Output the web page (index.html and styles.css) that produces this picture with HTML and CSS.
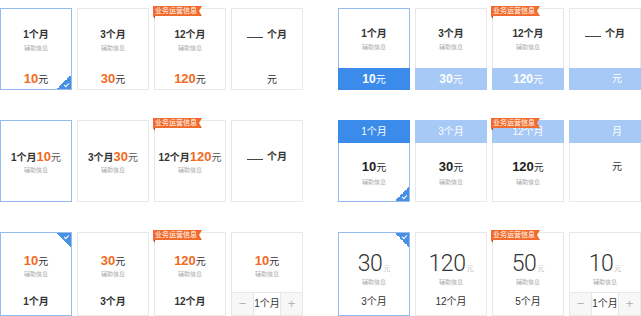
FILE: index.html
```html
<!DOCTYPE html>
<html lang="zh">
<head>
<meta charset="utf-8">
<title>套餐选择</title>
<link rel="stylesheet" href="styles.css">
</head>
<body>
<div class="board">
  <div class="group">
    <!-- row 1 left -->
    <div class="card a sel"><div class="ttl">1个月</div><div class="sub">辅助信息</div><div class="price"><b>10</b>元</div><i class="tick br"></i></div>
    <div class="card a"><div class="ttl">3个月</div><div class="sub">辅助信息</div><div class="price"><b>30</b>元</div></div>
    <div class="card a"><span class="badge"><span class="bdg">业务运营信息</span></span><div class="ttl">12个月</div><div class="sub">辅助信息</div><div class="price"><b>120</b>元</div></div>
    <div class="card a"><div class="ttl"><span class="line"></span> 个月</div><div class="price"><span class="gap s"></span>元</div></div>
    <!-- row 2 left -->
    <div class="card c sel"><div class="ttl">1个月<b class="o">10</b><span class="yuan">元</span></div><div class="sub">辅助信息</div></div>
    <div class="card c"><div class="ttl">3个月<b class="o">30</b><span class="yuan">元</span></div><div class="sub">辅助信息</div></div>
    <div class="card c"><span class="badge"><span class="bdg">业务运营信息</span></span><div class="ttl">12个月<b class="o">120</b><span class="yuan">元</span></div><div class="sub">辅助信息</div></div>
    <div class="card c"><div class="ttl"><span class="line"></span> 个月</div></div>
    <!-- row 3 left -->
    <div class="card e sel"><div class="price"><b>10</b>元</div><div class="sub">辅助信息</div><div class="foot">1个月</div><i class="tick tr"></i></div>
    <div class="card e"><div class="price"><b>30</b>元</div><div class="sub">辅助信息</div><div class="foot">3个月</div></div>
    <div class="card e"><span class="badge"><span class="bdg">业务运营信息</span></span><div class="price"><b>120</b>元</div><div class="sub">辅助信息</div><div class="foot">12个月</div></div>
    <div class="card e"><div class="price"><b>10</b>元</div><div class="sub">辅助信息</div>
      <div class="stepper"><span class="btn">−</span><span class="val">1个月</span><span class="btn">+</span></div></div>
  </div>

  <div class="group">
    <!-- row 1 right -->
    <div class="card b sel"><div class="ttl">1个月</div><div class="sub">辅助信息</div><div class="bar"><b>10</b>元</div></div>
    <div class="card b"><div class="ttl">3个月</div><div class="sub">辅助信息</div><div class="bar"><b>30</b>元</div></div>
    <div class="card b"><span class="badge"><span class="bdg">业务运营信息</span></span><div class="ttl">12个月</div><div class="sub">辅助信息</div><div class="bar"><b>120</b>元</div></div>
    <div class="card b"><div class="ttl"><span class="line"></span> 个月</div><div class="bar"><span class="gap"></span>元</div></div>
    <!-- row 2 right -->
    <div class="card d sel"><div class="head">1个月</div><div class="price"><b>10</b>元</div><div class="sub">辅助信息</div><i class="tick br"></i></div>
    <div class="card d"><div class="head">3个月</div><div class="price"><b>30</b>元</div><div class="sub">辅助信息</div></div>
    <div class="card d"><span class="badge"><span class="bdg">业务运营信息</span></span><div class="head">12个月</div><div class="price"><b>120</b>元</div><div class="sub">辅助信息</div></div>
    <div class="card d"><div class="head"><span class="gap"></span>月</div><div class="price"><span class="gap"></span>元</div></div>
    <!-- row 3 right -->
    <div class="card f sel"><div class="big">30<span class="u">元</span></div><div class="sub">辅助信息</div><div class="foot">3个月</div><i class="tick tr"></i></div>
    <div class="card f"><div class="big">120<span class="u">元</span></div><div class="sub">辅助信息</div><div class="foot">12个月</div></div>
    <div class="card f"><span class="badge"><span class="bdg">业务运营信息</span></span><div class="big">50<span class="u">元</span></div><div class="sub">辅助信息</div><div class="foot">5个月</div></div>
    <div class="card f"><div class="big">10<span class="u">元</span></div><div class="sub">辅助信息</div>
      <div class="stepper"><span class="btn">−</span><span class="val">1个月</span><span class="btn">+</span></div></div>
  </div>
</div>
</body>
</html>
```

FILE: styles.css
```css
body {
  margin: 0;
  background: #fff;
  color: #333;
  font-family: "Liberation Sans", "Noto Sans CJK SC", sans-serif;
}

.board {
  display: flex;
  gap: 35px;
  padding-top: 8px;
}

.group {
  display: grid;
  grid-template-columns: repeat(4, 72px);
  grid-template-rows: 82px 82px 84px;
  column-gap: 5px;
  row-gap: 30px;
}

.card {
  position: relative;
  box-sizing: border-box;
  border: 1px solid #e8e8e8;
  background: #fff;
  display: flex;
  flex-direction: column;
  align-items: center;
}

.card.sel {
  border-color: #93bdf0;
}

.ttl {
  font-size: 10px;
  font-weight: bold;
  line-height: 14px;
  white-space: nowrap;
}

.sub {
  font-size: 6px;
  line-height: 12px;
  color: #aaa;
  white-space: nowrap;
}

.price {
  font-size: 10px;
  line-height: 18px;
  color: #333;
  white-space: nowrap;
}

.price b {
  font-size: 13px;
  color: #f26a21;
}

.line {
  display: inline-block;
  width: 16px;
  height: 0;
  border-bottom: 1px solid #444;
  margin-right: 1px;
}

.gap {
  display: inline-block;
  width: 24px;
}

.gap.s {
  width: 10px;
}

/* type a: title, sub, price at bottom */
.a {
  padding-top: 19px;
}

.a .price {
  margin-top: auto;
  padding-bottom: 0;
}

/* type b: bottom colored bar */
.b {
  padding-top: 18px;
}

.bar {
  align-self: stretch;
  margin: auto -1px -1px;
  height: 22px;
  line-height: 22px;
  background: #a6c9f6;
  color: #fff;
  font-size: 10px;
  text-align: center;
  white-space: nowrap;
}

.bar b {
  font-size: 12px;
}

.sel .bar {
  background: #3b8beb;
}

/* type c: inline price in title */
.c {
  padding-top: 29px;
}

.c .sub {
  line-height: 10px;
}

.o {
  font-size: 13px;
  color: #f26a21;
}

.yuan {
  font-weight: normal;
  color: #555;
}

/* type d: top colored header */
.head {
  align-self: stretch;
  margin: -1px -1px 0;
  height: 23px;
  line-height: 23px;
  background: #a6c9f6;
  color: #fff;
  font-size: 10px;
  text-align: center;
  white-space: nowrap;
}

.sel .head {
  background: #3b8beb;
}

.d .price {
  margin-top: 15px;
}

.d .price b {
  color: #222;
}

.d .sub {
  line-height: 10px;
}

/* type e: price, sub, footer */
.e {
  padding-top: 20px;
}

.e .price {
  line-height: 16px;
}

.e .sub {
  line-height: 8px;
}

.foot {
  margin-top: auto;
  padding-bottom: 5px;
  font-size: 10px;
  font-weight: bold;
  line-height: 16px;
  white-space: nowrap;
}

.f .foot {
  font-weight: normal;
}

/* type f: big number */
.f {
  padding-top: 18px;
}

.big {
  height: 26px;
  font-family: Roboto, "Liberation Sans", sans-serif;
  font-weight: 300;
  font-size: 23px;
  line-height: 26px;
  color: #333;
  letter-spacing: -0.5px;
  white-space: nowrap;
}

.big .u {
  font-family: "Liberation Sans", "Noto Sans CJK SC", sans-serif;
  font-size: 7px;
  line-height: 0;
  color: #999;
  margin-left: 1px;
  letter-spacing: 0;
}

.f .sub {
  line-height: 10px;
}

/* stepper */
.stepper {
  align-self: stretch;
  margin: auto -1px -1px;
  height: 24px;
  display: grid;
  grid-template-columns: 21px 1fr 21px;
  border: 1px solid #e8e8e8;
  box-sizing: border-box;
}

.stepper .btn {
  background: #f7f7f7;
  color: #b5b5b5;
  font-size: 13px;
  line-height: 22px;
  text-align: center;
}

.stepper .val {
  border-left: 1px solid #e8e8e8;
  border-right: 1px solid #e8e8e8;
  font-size: 10px;
  line-height: 22px;
  text-align: center;
  color: #333;
  white-space: nowrap;
}

/* badge */
.badge {
  position: absolute;
  top: -3px;
  left: -2px;
  z-index: 2;
}

.bdg {
  display: block;
  background: #f26b2c;
  color: #fff;
  font-size: 7px;
  line-height: 10px;
  padding: 0 5px 0 2px;
  white-space: nowrap;
  clip-path: polygon(0 0, 100% 0, calc(100% - 3px) 50%, 100% 100%, 0 100%);
}

.badge::after {
  content: "";
  position: absolute;
  left: 0;
  top: 10px;
  width: 0;
  height: 0;
  border-top: 3px solid #b5461a;
  border-left: 2px solid transparent;
}

/* selected tick corner */
.tick {
  position: absolute;
  width: 14px;
  height: 14px;
  right: 0;
}

.tick.br {
  bottom: 0;
  background: linear-gradient(to bottom right, transparent 50%, #4a90e2 50%);
}

.tick.tr {
  top: 0;
  background: linear-gradient(to top right, transparent 50%, #4a90e2 50%);
}

.tick::after {
  content: "";
  position: absolute;
  width: 4px;
  height: 2px;
  border-left: 1px solid #fff;
  border-bottom: 1px solid #fff;
  transform: rotate(-45deg);
}

.tick.br::after {
  right: 2px;
  bottom: 3px;
}

.tick.tr::after {
  right: 2px;
  top: 2px;
}
```
